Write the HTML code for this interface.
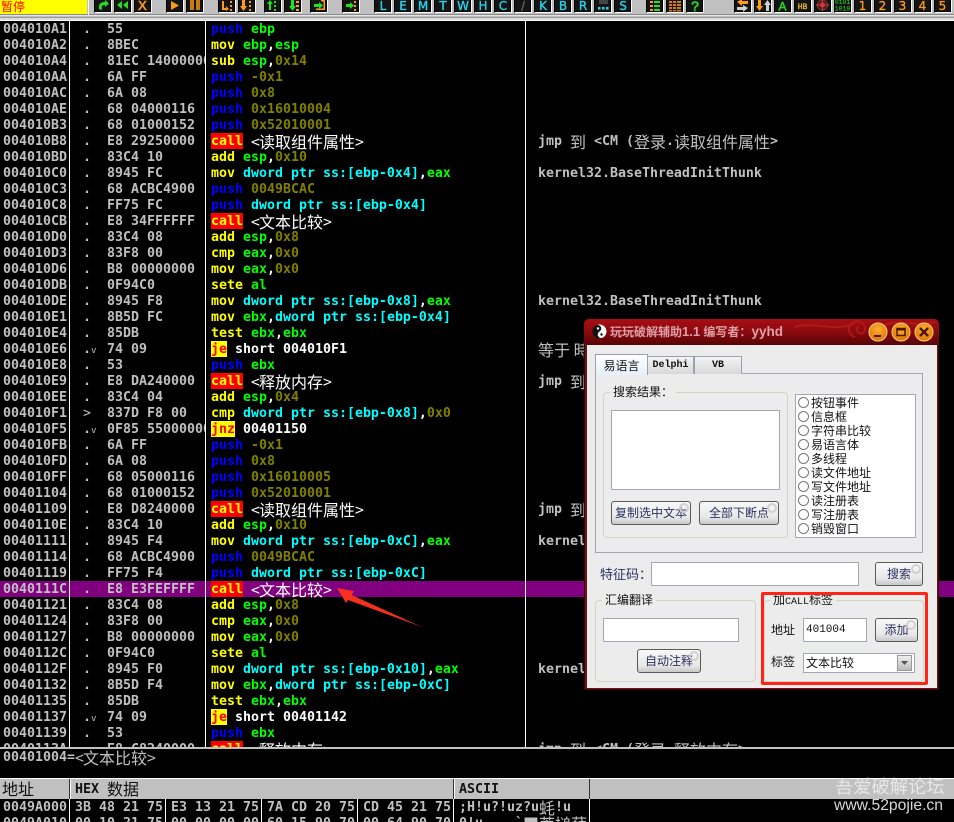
<!DOCTYPE html>
<html><head><meta charset="utf-8">
<style>
html,body{margin:0;padding:0;background:#000}
#p{position:relative;width:954px;height:822px;overflow:hidden;background:#000;font-family:"DejaVu Sans Mono","Liberation Mono",monospace;font-size:13.29px;font-weight:bold;color:#c0c0c0}
.a{position:absolute}
.col{position:absolute;top:21px}
.col div{height:16px;line-height:18px;white-space:pre}
.c,.g{font-family:"WenQuanYi Zen Hei","Noto Sans CJK SC",sans-serif;font-size:16px;font-weight:normal;line-height:16px;vertical-align:top;display:inline-block;height:16px}
.c{color:#fff}.g{color:#c0c0c0}
u{display:inline-block;width:8px;text-align:center;text-decoration:none}
i{font-style:normal}
.b{color:#0000ff}.y{color:#ffff00}.n{color:#00ff00}.o{color:#808000}.k{color:#00ffff}.w{color:#fff}
.cl{background:#ff0000;color:#ffff00;display:inline-block;height:16px;line-height:18px;vertical-align:top}
.j{background:#ffff00;color:#ff0000;display:inline-block;height:16px;line-height:18px;vertical-align:top}
.v{font-size:9px;font-weight:normal}
.vl{position:absolute;width:1px;background:#fff}
.cm{position:absolute;left:538px;white-space:pre;line-height:18px;height:16px}
#d{position:absolute;left:584px;top:319px;width:355px;height:371px;background:#6a1212;font-family:"WenQuanYi Zen Hei","Noto Sans CJK SC",sans-serif;font-size:12px;font-weight:normal;color:#111;box-sizing:border-box;border:1px solid #3a0606;border-top:0;border-radius:5px 5px 0 0}
#d .x{position:absolute;box-sizing:border-box}
.in{background:#fff;border:1px solid #a4a8b0}
.bt{background:linear-gradient(#f8f8f8,#e8e8e8 70%,#c8c8c8);border:1px solid #5a5a5a;border-radius:3px;color:#2c3060;text-align:center;line-height:22px}
.bt::after{content:"";position:absolute;right:1px;top:1px;width:6px;height:6px;border:2px solid #d0d0d0;border-radius:50%}
.gp{border:1px solid #d2d4c4;border-radius:4px}
.lg{background:#ececec;padding:0 3px;line-height:14px;height:14px}
.m{font-family:"Liberation Mono",monospace;font-size:10px}
.ra{display:block;height:14px;line-height:14px;position:absolute;left:2px;white-space:pre}
.ra b{display:inline-block;width:9px;height:9px;border:1px solid #777;border-radius:50%;margin-right:2px;vertical-align:-1px;background:#fff}
svg text{font-weight:normal}
</style></head><body>
<div id="p">

<!-- toolbar -->
<svg class="a" style="left:0;top:0" width="954" height="21" viewBox="0 0 954 21">
<rect width="954" height="14" fill="#c0c0c0"/>
<rect y="14" width="954" height="1" fill="#8a8a8a"/><rect y="15" width="954" height="1" fill="#e4e4e4"/><rect y="16" width="954" height="1" fill="#c0c0c0"/><rect y="17" width="954" height="1" fill="#9a9a9a"/><rect y="18" width="954" height="2" fill="#dcdcdc"/><rect y="20" width="954" height="1" fill="#fff"/>
<rect width="87" height="14" fill="#ffff00"/><rect x="88" width="1" height="15" fill="#fff"/>
<text x="1" y="11" font-family="WenQuanYi Zen Hei,Noto Sans CJK SC,sans-serif" font-size="12" fill="#ff0000">暂停</text>
<g fill="#141414" stroke="#000">
<rect x="94.5" y="-2" width="16" height="14"/><rect x="114.5" y="-2" width="16" height="14"/><rect x="134.5" y="-2" width="16" height="14"/>
<rect x="166.5" y="-2" width="16" height="14"/><rect x="186.5" y="-2" width="16" height="14"/>
<rect x="218.5" y="-2" width="16" height="14"/><rect x="238.5" y="-2" width="16" height="14"/>
<rect x="264.5" y="-2" width="16" height="14"/><rect x="284.5" y="-2" width="16" height="14"/>
<rect x="310.5" y="-2" width="16" height="14"/><rect x="342.5" y="-2" width="16" height="14"/>
<rect x="374.5" y="-2" width="16" height="14"/><rect x="394.5" y="-2" width="16" height="14"/><rect x="414.5" y="-2" width="16" height="14"/><rect x="434.5" y="-2" width="16" height="14"/><rect x="454.5" y="-2" width="16" height="14"/><rect x="474.5" y="-2" width="16" height="14"/><rect x="494.5" y="-2" width="16" height="14"/><rect x="514.5" y="-2" width="16" height="14"/><rect x="534.5" y="-2" width="16" height="14"/><rect x="554.5" y="-2" width="16" height="14"/><rect x="574.5" y="-2" width="16" height="14"/><rect x="594.5" y="-2" width="16" height="14"/><rect x="614.5" y="-2" width="16" height="14"/>
<rect x="646.5" y="-2" width="16" height="14"/><rect x="666.5" y="-2" width="16" height="14"/><rect x="686.5" y="-2" width="16" height="14"/>
<rect x="734.5" y="-2" width="16" height="14"/><rect x="754.5" y="-2" width="16" height="14"/><rect x="774.5" y="-2" width="16" height="14"/><rect x="794.5" y="-2" width="16" height="14"/><rect x="814.5" y="-2" width="16" height="14"/><rect x="834.5" y="-2" width="16" height="14"/><rect x="854.5" y="-2" width="16" height="14"/><rect x="874.5" y="-2" width="16" height="14"/><rect x="894.5" y="-2" width="16" height="14"/><rect x="914.5" y="-2" width="16" height="14"/><rect x="934.5" y="-2" width="16" height="14"/>
</g>
<path fill="none" stroke="#fff" d="M111.500 0V12.500H95M131.500 0V12.500H115M151.500 0V12.500H135M183.500 0V12.500H167M203.500 0V12.500H187M235.500 0V12.500H219M255.500 0V12.500H239M281.500 0V12.500H265M301.500 0V12.500H285M327.500 0V12.500H311M359.500 0V12.500H343M391.500 0V12.500H375M411.500 0V12.500H395M431.500 0V12.500H415M451.500 0V12.500H435M471.500 0V12.500H455M491.500 0V12.500H475M511.500 0V12.500H495M531.500 0V12.500H515M551.500 0V12.500H535M571.500 0V12.500H555M591.500 0V12.500H575M611.500 0V12.500H595M631.500 0V12.500H615M663.500 0V12.500H647M683.500 0V12.500H667M703.500 0V12.500H687M751.500 0V12.500H735M771.500 0V12.500H755M791.500 0V12.500H775M811.500 0V12.500H795M831.500 0V12.500H815M851.500 0V12.500H835M871.500 0V12.500H855M891.500 0V12.500H875M911.500 0V12.500H895M931.500 0V12.500H915M951.500 0V12.500H935"/>
<!-- run group -->
<path d="M99 9C98 4 101 2 105 2V0L109 3.500 105 7V5C102 5 101 6 102 10Z" fill="#22e022"/>
<path d="M122 1V9L117 5ZM128 1V9L123 5Z" fill="#22e022"/>
<text x="142.500" y="10" text-anchor="middle" font-family="Liberation Sans,sans-serif" font-size="13" stroke="#ff9a1a" stroke-width=".6" fill="#ff9a1a">X</text>
<path d="M171 1V10L179 5.500Z" fill="#ff9a1a"/>
<path d="M190 0H194V10H190ZM196 0H200V10H196Z" fill="#c87a14"/>
<path d="M222 1H224V8H226V6L229 9 226 11V10H222ZM230 1h2v2h-2zM230 5h2v2h-2zM230 9h2v2h-2z" fill="#ff9a1a"/>
<path d="M242 0h3v6h2l-3.500 5-3.500-5h2ZM249 1h2v2h-2zM249 5h2v2h-2zM249 9h2v2h-2z" fill="#ff9a1a"/>
<path d="M270 0l3 4h-2v6h-2V4h-2ZM274 1h2v2h-2zM274 5h2v2h-2zM274 9h2v2h-2z" fill="#22e022"/>
<path d="M291 0h3v6h2l-3.500 5-3.500-5h2Z" fill="#22e022"/><path d="M296 1h3v2h-3zM296 5h3v2h-3zM296 9h3v2h-3z" fill="#ff9a1a"/>
<path d="M314 4h5V2l4 3.500-4 3.500V7h-5Z" fill="#22e022"/><path d="M321 0h4v10h-9V8.500h7.500V1.500H321Z" fill="#ff9a1a"/>
<path d="M346 4h4V2l4 3.500-4 3.500V7h-4Z" fill="#22e022"/><path d="M354 1h2v2h-2zM354 5h2v2h-2zM354 9h2v2h-2z" fill="#ff9a1a"/>
<!-- letters -->
<g font-family="DejaVu Sans,sans-serif" font-size="12" fill="#22d8f0" stroke="#22d8f0" stroke-width=".3" text-anchor="middle">
<text x="383" y="10">L</text><text x="403" y="10">E</text><text x="423" y="10">M</text><text x="443" y="10">T</text><text x="463" y="10">W</text><text x="483" y="10">H</text><text x="503" y="10">C</text><text x="523" y="10" fill="#666" stroke="#666">/</text><text x="543" y="10">K</text><text x="563" y="10">B</text><text x="583" y="10">R</text><text x="623" y="10">S</text>
</g>
<path d="M598 7h2.500v2.500H598zM602 7h2.500v2.500H602zM606 7h2.500v2.500H606z" fill="#22d8f0"/><rect x="599" y="0" width="9" height="4" fill="#444"/>
<!-- lists -->
<path d="M650 1h3v2h-3zM650 5h3v2h-3zM650 9h3v2h-3z" fill="#ff9a1a"/><path d="M654 1h6v2h-6zM654 5h6v2h-6zM654 9h6v2h-6z" fill="#22e022"/>
<path d="M669 1h12v2h-12zM669 4h12v2h-12zM669 7h12v2h-12zM669 10h12v1.500h-12z" fill="#d8781a"/><path d="M672 0h1v12h-1zM676 0h1v12h-1z" fill="#222"/>
<text x="695" y="11" text-anchor="middle" font-family="Liberation Sans,sans-serif" font-size="14" stroke="#22e022" stroke-width=".6" fill="#22e022">?</text>
<!-- right group -->
<path d="M737 2l5-3v2h6v3h-6v2Z" fill="#ff9a1a"/><path d="M748 8l-5-3v2h-6v3h6v2Z" fill="#d0d0d0"/>
<path d="M758 0h3v6h2l-3.500 5L756 6h2Z" fill="#ff9a1a"/><path d="M766 11V5h-2l3.500-5L771 5h-2v6Z" fill="#d0d0d0"/>
<text x="782.500" y="10.500" text-anchor="middle" font-family="Liberation Sans,sans-serif" font-size="12" stroke="#22e022" stroke-width=".4" fill="#22e022">A</text>
<text x="802.500" y="9" text-anchor="middle" font-family="Liberation Mono,monospace" font-size="8" stroke="#f0c020" stroke-width=".3" fill="#f0c020">HB</text>
<circle cx="822.500" cy="5" r="5" fill="#3a2020" stroke="#883030"/><circle cx="822.500" cy="5" r="2.500" fill="#ff2020"/><path d="M816 5h13M822.500 -1v12" stroke="#c04040" fill="none"/>
<g font-family="Liberation Mono,monospace" font-size="6.500" fill="#22e022" text-anchor="middle"><text x="842.500" y="4">0101</text><text x="842.500" y="10.500">1010</text></g>
<g font-family="DejaVu Sans,sans-serif" font-size="12" fill="#ff9a1a" stroke="#ff9a1a" stroke-width=".3" text-anchor="middle"><text x="862.500" y="10">1</text><text x="882.500" y="10">2</text><text x="902.500" y="10">3</text><text x="922.500" y="10">4</text><text x="942.500" y="10">5</text></g>
</svg>

<!-- CPU pane -->
<div class="a" style="left:0;top:21px;width:954px;height:726px;overflow:hidden">
<div class="a" style="left:0;top:560px;width:954px;height:16px;background:#800080"></div>
<div class="vl" style="left:69px;top:0;height:726px"></div>
<div class="vl" style="left:205px;top:0;height:726px"></div>
<div class="vl" style="left:525px;top:0;height:726px"></div>
<div class="col" style="left:3px;top:0"><div>004010A1</div><div>004010A2</div><div>004010A4</div><div>004010AA</div><div>004010AC</div><div>004010AE</div><div>004010B3</div><div>004010B8</div><div>004010BD</div><div>004010C0</div><div>004010C3</div><div>004010C8</div><div>004010CB</div><div>004010D0</div><div>004010D3</div><div>004010D6</div><div>004010DB</div><div>004010DE</div><div>004010E1</div><div>004010E4</div><div>004010E6</div><div>004010E8</div><div>004010E9</div><div>004010EE</div><div>004010F1</div><div>004010F5</div><div>004010FB</div><div>004010FD</div><div>004010FF</div><div>00401104</div><div>00401109</div><div>0040110E</div><div>00401111</div><div>00401114</div><div>00401119</div><div>0040111C</div><div>00401121</div><div>00401124</div><div>00401127</div><div>0040112C</div><div>0040112F</div><div>00401132</div><div>00401135</div><div>00401137</div><div>00401139</div><div>0040113A</div></div>
<div class="col" style="left:83px;top:0;width:22px"><div>.</div><div>.</div><div>.</div><div>.</div><div>.</div><div>.</div><div>.</div><div>.</div><div>.</div><div>.</div><div>.</div><div>.</div><div>.</div><div>.</div><div>.</div><div>.</div><div>.</div><div>.</div><div>.</div><div>.</div><div>.<span class="v">v</span></div><div>.</div><div>.</div><div>.</div><div><span style="font-weight:normal">&gt;</span></div><div>.<span class="v">v</span></div><div>.</div><div>.</div><div>.</div><div>.</div><div>.</div><div>.</div><div>.</div><div>.</div><div>.</div><div>.</div><div>.</div><div>.</div><div>.</div><div>.</div><div>.</div><div>.</div><div>.</div><div>.<span class="v">v</span></div><div>.</div><div>.</div></div>
<div class="col" style="left:107px;top:0;width:98px;overflow:hidden"><div>55</div><div>8BEC</div><div>81EC 14000000</div><div>6A FF</div><div>6A 08</div><div>68 04000116</div><div>68 01000152</div><div>E8 29250000</div><div>83C4 10</div><div>8945 FC</div><div>68 ACBC4900</div><div>FF75 FC</div><div>E8 34FFFFFF</div><div>83C4 08</div><div>83F8 00</div><div>B8 00000000</div><div>0F94C0</div><div>8945 F8</div><div>8B5D FC</div><div>85DB</div><div>74 09</div><div>53</div><div>E8 DA240000</div><div>83C4 04</div><div>837D F8 00</div><div>0F85 55000000</div><div>6A FF</div><div>6A 08</div><div>68 05000116</div><div>68 01000152</div><div>E8 D8240000</div><div>83C4 10</div><div>8945 F4</div><div>68 ACBC4900</div><div>FF75 F4</div><div>E8 E3FEFFFF</div><div>83C4 08</div><div>83F8 00</div><div>B8 00000000</div><div>0F94C0</div><div>8945 F0</div><div>8B5D F4</div><div>85DB</div><div>74 09</div><div>53</div><div>E8 C8240000</div></div>
<div class="col" style="left:211px;top:0;width:314px;overflow:hidden">
<div><i class="b">push</i> <i class="n">ebp</i></div>
<div><i class="y">mov</i> <i class="n">ebp</i><i class="w">,</i><i class="n">esp</i></div>
<div><i class="y">sub</i> <i class="n">esp</i><i class="w">,</i><i class="o">0x14</i></div>
<div><i class="b">push</i> <i class="o">-0x1</i></div>
<div><i class="b">push</i> <i class="o">0x8</i></div>
<div><i class="b">push</i> <i class="o">0x16010004</i></div>
<div><i class="b">push</i> <i class="o">0x52010001</i></div>
<div><i class="cl">call</i> <span class="c"><u>&lt;</u>读取组件属性<u>&gt;</u></span></div>
<div><i class="y">add</i> <i class="n">esp</i><i class="w">,</i><i class="o">0x10</i></div>
<div><i class="y">mov</i> <i class="k">dword ptr ss:[ebp-0x4]</i><i class="w">,</i><i class="n">eax</i></div>
<div><i class="b">push</i> <i class="o">0049BCAC</i></div>
<div><i class="b">push</i> <i class="k">dword ptr ss:[ebp-0x4]</i></div>
<div><i class="cl">call</i> <span class="c"><u>&lt;</u>文本比较<u>&gt;</u></span></div>
<div><i class="y">add</i> <i class="n">esp</i><i class="w">,</i><i class="o">0x8</i></div>
<div><i class="y">cmp</i> <i class="n">eax</i><i class="w">,</i><i class="o">0x0</i></div>
<div><i class="y">mov</i> <i class="n">eax</i><i class="w">,</i><i class="o">0x0</i></div>
<div><i class="y">sete</i> <i class="n">al</i></div>
<div><i class="y">mov</i> <i class="k">dword ptr ss:[ebp-0x8]</i><i class="w">,</i><i class="n">eax</i></div>
<div><i class="y">mov</i> <i class="n">ebx</i><i class="w">,</i><i class="k">dword ptr ss:[ebp-0x4]</i></div>
<div><i class="y">test</i> <i class="n">ebx</i><i class="w">,</i><i class="n">ebx</i></div>
<div><i class="j">je</i> <i class="w">short 004010F1</i></div>
<div><i class="b">push</i> <i class="n">ebx</i></div>
<div><i class="cl">call</i> <span class="c"><u>&lt;</u>释放内存<u>&gt;</u></span></div>
<div><i class="y">add</i> <i class="n">esp</i><i class="w">,</i><i class="o">0x4</i></div>
<div><i class="y">cmp</i> <i class="k">dword ptr ss:[ebp-0x8]</i><i class="w">,</i><i class="o">0x0</i></div>
<div><i class="j">jnz</i> <i class="w">00401150</i></div>
<div><i class="b">push</i> <i class="o">-0x1</i></div>
<div><i class="b">push</i> <i class="o">0x8</i></div>
<div><i class="b">push</i> <i class="o">0x16010005</i></div>
<div><i class="b">push</i> <i class="o">0x52010001</i></div>
<div><i class="cl">call</i> <span class="c"><u>&lt;</u>读取组件属性<u>&gt;</u></span></div>
<div><i class="y">add</i> <i class="n">esp</i><i class="w">,</i><i class="o">0x10</i></div>
<div><i class="y">mov</i> <i class="k">dword ptr ss:[ebp-0xC]</i><i class="w">,</i><i class="n">eax</i></div>
<div><i class="b">push</i> <i class="o">0049BCAC</i></div>
<div><i class="b">push</i> <i class="k">dword ptr ss:[ebp-0xC]</i></div>
<div><i class="cl">call</i> <span class="c"><u>&lt;</u>文本比较<u>&gt;</u></span></div>
<div><i class="y">add</i> <i class="n">esp</i><i class="w">,</i><i class="o">0x8</i></div>
<div><i class="y">cmp</i> <i class="n">eax</i><i class="w">,</i><i class="o">0x0</i></div>
<div><i class="y">mov</i> <i class="n">eax</i><i class="w">,</i><i class="o">0x0</i></div>
<div><i class="y">sete</i> <i class="n">al</i></div>
<div><i class="y">mov</i> <i class="k">dword ptr ss:[ebp-0x10]</i><i class="w">,</i><i class="n">eax</i></div>
<div><i class="y">mov</i> <i class="n">ebx</i><i class="w">,</i><i class="k">dword ptr ss:[ebp-0xC]</i></div>
<div><i class="y">test</i> <i class="n">ebx</i><i class="w">,</i><i class="n">ebx</i></div>
<div><i class="j">je</i> <i class="w">short 00401142</i></div>
<div><i class="b">push</i> <i class="n">ebx</i></div>
<div><i class="cl">call</i> <span class="c"><u>&lt;</u>释放内存<u>&gt;</u></span></div>
</div>
<div class="cm" style="top:112px">jmp <span class="g">到</span> &lt;CM (<span class="g">登录</span>.<span class="g">读取组件属性</span>&gt;</div>
<div class="cm" style="top:144px">kernel32.BaseThreadInitThunk</div>
<div class="cm" style="top:272px">kernel32.BaseThreadInitThunk</div>
<div class="cm" style="top:320px"><span class="g">等于 時</span></div>
<div class="cm" style="top:352px">jmp <span class="g">到</span></div>
<div class="cm" style="top:480px">jmp <span class="g">到</span></div>
<div class="cm" style="top:512px">kernel</div>
<div class="cm" style="top:640px">kernel</div>
<div class="cm" style="top:720px">jmp <span class="g">到</span> &lt;CM (<span class="g">登录</span>.<span class="g">释放内存</span>&gt;</div>
</div>

<!-- arrow -->
<svg class="a" style="left:320px;top:575px" width="120" height="65" viewBox="320 575 120 65"><polygon points="337,588 354,591 351.500,595 422,627 348,600 346,603" fill="#f5301e"/></svg>

<!-- info pane -->
<div class="a" style="left:0;top:747px;width:954px;height:2px;background:#c0c0c0"></div>
<div class="a" style="left:3px;top:749px;line-height:18px;height:16px;white-space:pre">00401004=<span class="g"><u>&lt;</u>文本比较<u>&gt;</u></span></div>

<!-- dump -->
<div class="a" style="left:0;top:778px;width:954px;height:1px;background:#fff"></div>
<div class="a" style="left:0;top:779px;width:954px;height:20px;background:#c0c0c0;color:#111;line-height:22px;white-space:pre">
<span class="a" style="left:2px;top:-1px;font:16px/20px 'WenQuanYi Zen Hei','Noto Sans CJK SC',sans-serif">地址</span>
<span class="a" style="left:75px;top:0">HEX</span>
<span class="a" style="left:107px;top:-1px;font:16px/20px 'WenQuanYi Zen Hei','Noto Sans CJK SC',sans-serif;color:#111">数据</span>
<span class="a" style="left:459px;top:0">ASCII</span>
<span class="a" style="left:69px;top:0;width:1px;height:20px;background:#333"></span><span class="a" style="left:70px;top:0;width:1px;height:20px;background:#fff"></span>
<span class="a" style="left:453px;top:0;width:1px;height:20px;background:#333"></span><span class="a" style="left:454px;top:0;width:1px;height:20px;background:#fff"></span>
<span class="a" style="left:589px;top:0;width:1px;height:20px;background:#333"></span>
</div>
<div class="vl" style="left:69px;top:799px;height:23px"></div><div class="vl" style="left:165px;top:799px;height:23px"></div><div class="vl" style="left:261px;top:799px;height:23px"></div><div class="vl" style="left:357px;top:799px;height:23px"></div><div class="vl" style="left:453px;top:799px;height:23px"></div><div class="vl" style="left:589px;top:799px;height:23px"></div>
<div class="col" style="left:3px;top:799px"><div>0049A000</div><div>0049A010</div></div>
<div class="col" style="left:75px;top:799px"><div>3B 48 21 75</div><div>00 10 21 75</div></div>
<div class="col" style="left:171px;top:799px"><div>E3 13 21 75</div><div>00 00 00 00</div></div>
<div class="col" style="left:267px;top:799px"><div>7A CD 20 75</div><div>60 15 90 70</div></div>
<div class="col" style="left:363px;top:799px"><div>CD 45 21 75</div><div>00 64 90 70</div></div>
<div class="col" style="left:459px;top:799px"><div>;H!u?!uz?u<span class="g">蚝</span>!u</div><div>0!u    `<span class="g">■萃搥薛</span></div></div>

<!-- watermark -->
<div class="a" style="left:835px;top:775px;font:18.300px/22px 'Noto Sans CJK SC',sans-serif;color:#eeeeee;opacity:.85;white-space:nowrap">吾爱破解论坛</div>
<div class="a" style="left:834px;top:797px;font:normal 15.700px/18px 'Liberation Sans',sans-serif;color:#d8d8d8;white-space:nowrap">www.52pojie.cn</div>

<!-- dialog -->
<div id="d">
<div class="x" style="left:-1px;top:0;width:355px;height:26px;background:linear-gradient(#a80e14,#860a0e 55%,#560306);border-radius:5px 5px 0 0"></div>
<svg class="x" style="left:60px;top:0" width="294" height="26" viewBox="0 0 294 26"><g fill="none" stroke="#b81c1c" stroke-width="2" opacity=".8"><path d="M150 8C170 2 190 14 210 4"/><path d="M210 18a8 8 0 1 1 10-8a4 4 0 1 1-6-3"/><path d="M240 6C255 0 265 8 290 3"/></g></svg>
<svg class="x" style="left:7px;top:5px" width="15" height="15" viewBox="0 0 15 15"><circle cx="7.500" cy="7.500" r="7" fill="#111"/><path d="M7.500 .5a7 7 0 0 1 0 14a3.500 3.500 0 0 1 0-7a3.500 3.500 0 0 0 0-7Z" fill="#fff" transform="rotate(-30 7.500 7.500)"/><circle cx="6" cy="4.500" r="1.200" fill="#fff"/><circle cx="9.500" cy="10.500" r="1.200" fill="#111"/></svg>
<div class="x" style="left:25px;top:5px;height:16px;line-height:16px;font-size:12px;font-weight:bold;color:#dca0a6;white-space:nowrap;font-family:'Liberation Sans','Noto Sans CJK SC',sans-serif">玩玩破解辅助<span style="font-size:13px">1.1</span> 编写者：<span style="font-size:13.500px">yyhd</span></div>
<svg class="x" style="left:282px;top:3px" width="72" height="20" viewBox="0 0 72 20"><defs><radialGradient id="og" cx=".5" cy=".35" r=".6"><stop offset="0" stop-color="#ffb030"/><stop offset="1" stop-color="#e07808"/></radialGradient></defs>
<circle cx="11" cy="10" r="9" fill="url(#og)" stroke="#f4d080"/><circle cx="34" cy="10" r="9" fill="url(#og)" stroke="#f4d080"/><circle cx="57" cy="10" r="9" fill="url(#og)" stroke="#f4d080"/>
<rect x="7" y="13" width="7" height="2" fill="#4a1a00"/><rect x="30" y="6.500" width="8" height="7" fill="none" stroke="#4a1a00" stroke-width="1.500"/><rect x="30" y="6" width="8" height="2.500" fill="#4a1a00"/><path d="M53 6l8 8M61 6l-8 8" stroke="#4a1a00" stroke-width="2.500"/></svg>
<div class="x" style="left:2px;top:26px;width:350px;height:343px;background:#ececec"></div>
<!-- tabs -->
<div class="x" style="left:10px;top:54px;width:328px;height:180px;background:#ececec;border:1px solid #a4a8b0"></div>
<div class="x" style="left:10px;top:35px;width:53px;height:21px;background:linear-gradient(#fff,#f0f6fc 60%,#e4f0fa);border:1px solid #9aa0b0;border-bottom:0;text-align:center;line-height:21px">易语言</div>
<div class="x m" style="left:62px;top:37px;width:47px;height:18px;background:linear-gradient(#f4f4f4,#d8d8d8);border:1px solid #9aa0b0;border-bottom:0;text-align:center;line-height:18px;font-weight:bold">Delphi</div>
<div class="x m" style="left:109px;top:37px;width:48px;height:18px;background:linear-gradient(#f4f4f4,#d8d8d8);border:1px solid #9aa0b0;border-bottom:0;text-align:center;line-height:18px;font-weight:bold">VB</div>
<!-- search group -->
<div class="x gp" style="left:18px;top:73px;width:185px;height:146px"></div>
<div class="x lg" style="left:25px;top:66px">搜索结果：</div>
<div class="x in" style="left:26px;top:91px;width:169px;height:80px"></div>
<div class="x bt" style="left:26px;top:182px;width:80px;height:24px">复制选中文本</div>
<div class="x bt" style="left:114px;top:182px;width:80px;height:24px">全部下断点</div>
<div class="x in" style="left:210px;top:75px;width:121px;height:144px">
<span class="ra" style="top:1px"><b></b>按钮事件</span><span class="ra" style="top:15px"><b></b>信息框</span><span class="ra" style="top:29px"><b></b>字符串比较</span><span class="ra" style="top:43px"><b></b>易语言体</span><span class="ra" style="top:57px"><b></b>多线程</span><span class="ra" style="top:71px"><b></b>读文件地址</span><span class="ra" style="top:85px"><b></b>写文件地址</span><span class="ra" style="top:99px"><b></b>读注册表</span><span class="ra" style="top:113px"><b></b>写注册表</span><span class="ra" style="top:127px"><b></b>销毁窗口</span>
</div>
<!-- signature -->
<div class="x" style="left:15px;top:247px;height:16px;line-height:16px;color:#2c3060;font-size:13px;white-space:nowrap">特征码：</div>
<div class="x in" style="left:66px;top:243px;width:208px;height:24px"></div>
<div class="x bt" style="left:290px;top:243px;width:48px;height:24px">搜索</div>
<!-- asm group -->
<div class="x gp" style="left:10px;top:281px;width:161px;height:82px"></div>
<div class="x lg" style="left:17px;top:274px">汇编翻译</div>
<div class="x in" style="left:18px;top:299px;width:136px;height:24px"></div>
<div class="x bt" style="left:52px;top:330px;width:64px;height:24px">自动注释</div>
<!-- call group -->
<div class="x gp" style="left:179px;top:281px;width:160px;height:82px"></div>
<div class="x lg" style="left:185px;top:274px">加<span class="m">CALL</span>标签</div>
<div class="x" style="left:186px;top:303px;height:16px;line-height:16px;font-size:12px">地址</div>
<div class="x in m" style="left:218px;top:299px;width:64px;height:24px;line-height:22px;padding-left:2px;font-size:11px">401004</div>
<div class="x bt" style="left:290px;top:299px;width:43px;height:24px">添加</div>
<div class="x" style="left:186px;top:335px;height:16px;line-height:16px;font-size:12px">标签</div>
<div class="x in" style="left:218px;top:334px;width:112px;height:20px;line-height:18px;padding-left:2px">文本比较</div>
<div class="x" style="left:312px;top:336px;width:15px;height:16px;background:linear-gradient(#eee,#bbb);border:1px solid #999"></div>
<svg class="x" style="left:316px;top:342px" width="7" height="4"><path d="M0 0h7L3.500 4Z" fill="#555"/></svg>
</div>
<!-- red highlight -->
<div class="a" style="left:761px;top:592px;width:167px;height:93px;box-sizing:border-box;border:3px solid #ff2418;border-radius:2px"></div>
</div>
</body></html>
